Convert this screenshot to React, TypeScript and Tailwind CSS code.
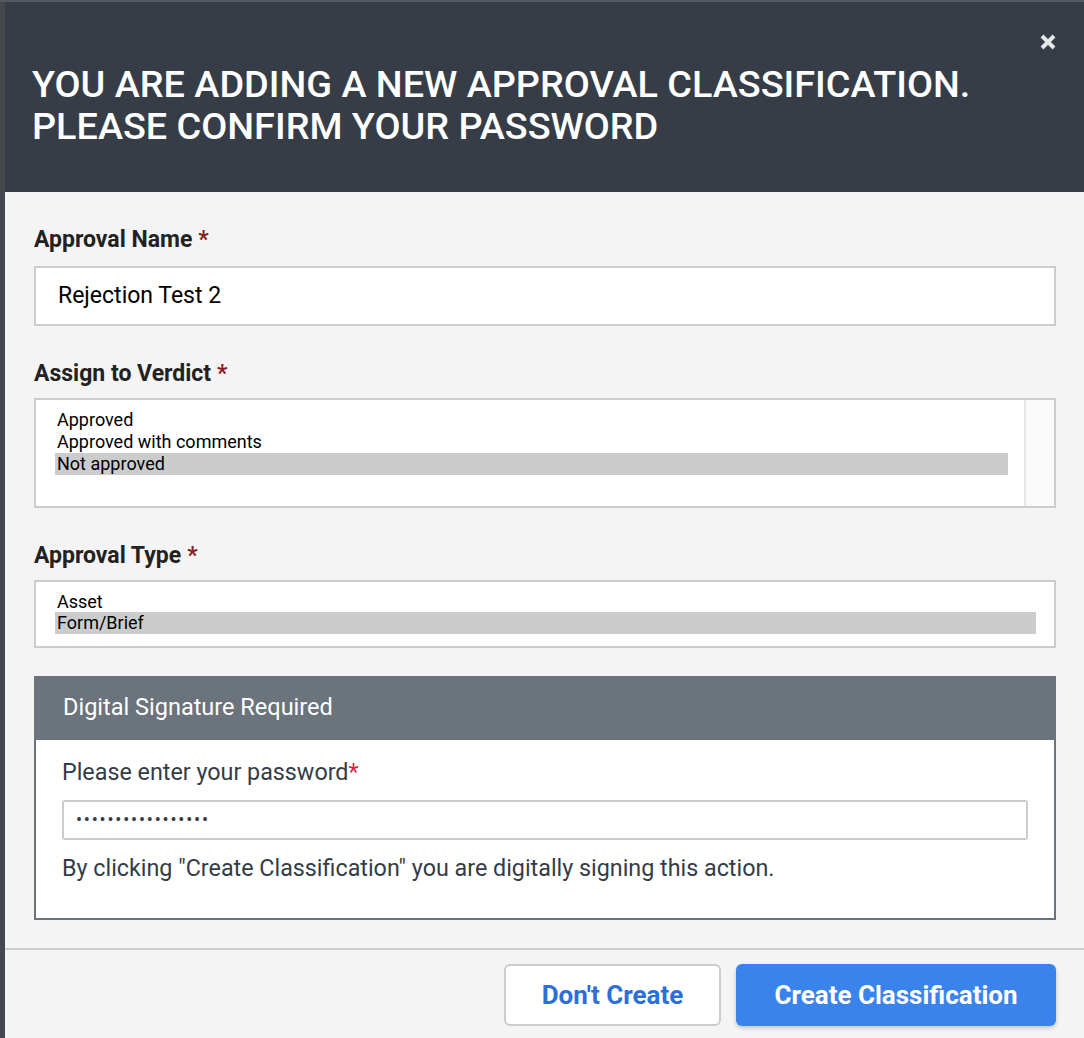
import React from "react";

function Req({ color = "text-[#8b1c1c]" }: { color?: string }) {
  return <span className={`${color} ml-[6px]`}>*</span>;
}

export default function App() {
  return (
    <div className="w-[1084px] h-[1038px] bg-[#45484d] flex flex-col overflow-hidden" style={{ fontFamily: "Roboto, 'Liberation Sans', sans-serif" }}>
      <div className="h-[2px] bg-[#56595f] shrink-0" />
      <div className="flex flex-1 min-h-0">
        <div className="w-[5px] shrink-0 bg-[#45484d]" />
        <div className="flex-1 flex flex-col bg-[#f4f4f4]">
          {/* Header */}
          <div className="relative h-[190px] shrink-0 bg-[#363d47] pt-[61px] pl-[27px] pr-[60px]">
            <h1 className="text-white text-[37.8px] leading-[42px] font-medium uppercase whitespace-nowrap">
              You are adding a new approval classification.
              <br />
              Please confirm your password
            </h1>
            <button className="absolute right-[26px] top-[30px] w-[20px] h-[20px] flex items-center justify-center">
              <svg viewBox="0 0 20 20" width="20" height="20">
                <path d="M4 4 L16 16 M16 4 L4 16" stroke="#e4e6e8" strokeWidth="4" strokeLinecap="butt" />
              </svg>
            </button>
          </div>

          {/* Body */}
          <div className="flex flex-col pl-[29px] pr-[28px] pt-[34px] h-[756px] shrink-0">
            <label className="text-[23px] leading-[28px] font-bold text-[#222]">
              Approval Name<Req />
            </label>
            <div className="mt-[12px] h-[60px] border-2 border-[#cccccc] bg-white flex items-center pl-[22px] text-[23px] text-black">
              Rejection Test 2
            </div>

            <label className="mt-[34px] text-[23px] leading-[28px] font-bold text-[#222]">
              Assign to Verdict<Req />
            </label>
            <div className="mt-[10px] h-[110px] border-2 border-[#cccccc] bg-white flex">
              <div className="flex-1 pt-[9px] pl-[19px] pr-[16px] text-[18px] leading-[22px] text-black">
                <div className="pl-[2px]">Approved</div>
                <div className="pl-[2px]">Approved with comments</div>
                <div className="pl-[2px] bg-[#cccccc]">Not approved</div>
              </div>
              <div className="w-[30px] bg-[#fafafa] border-l-2 border-[#e6e6e6]" />
            </div>

            <label className="mt-[34px] text-[23px] leading-[28px] font-bold text-[#222]">
              Approval Type<Req />
            </label>
            <div className="mt-[10px] h-[68px] border-2 border-[#cccccc] bg-white pt-[9px] pl-[19px] pr-[18px] text-[18px] leading-[22px] text-black">
              <div className="pl-[2px] leading-[21px]">Asset</div>
              <div className="pl-[2px] bg-[#cccccc]">Form/Brief</div>
            </div>

            {/* Digital signature */}
            <div className="mt-[28px] border-2 border-t-0 border-[#6b737c] bg-white flex flex-col h-[244px]">
              <div className="h-[64px] bg-[#6b737c] flex items-center -mx-[2px] pl-[29px] text-white text-[23.5px]">
                Digital Signature Required
              </div>
              <div className="pl-[26px] pr-[26px] pt-[18px] text-[#343c46] text-[23.3px] leading-[28px]">
                <div>
                  Please enter your password<span className="text-[#dc1f3c]">*</span>
                </div>
                <div className="mt-[14px] h-[40px] border-2 border-[#cccccc] rounded-[3px] flex items-center pl-[12px] text-[18px] tracking-[1.8px] text-[#343c46]">
                  •••••••••••••••••
                </div>
                <div className="mt-[14px]">
                  By clicking "Create Classification" you are digitally signing this action.
                </div>
              </div>
            </div>
          </div>

          {/* Footer */}
          <div className="flex-1 border-t-2 border-[#cccccc] bg-[#f4f4f4] flex justify-end items-start pt-[14px] pr-[28px] gap-[15px]">
            <button className="w-[217px] h-[62px] bg-white border-2 border-[#cccccc] rounded-[6px] text-[#2c6fd8] text-[26px] font-bold">
              Don't Create
            </button>
            <button className="w-[320px] h-[62px] bg-[#3a83ea] rounded-[6px] text-white text-[26px] font-bold shadow-[0_2px_4px_rgba(0,0,0,0.2)]">
              Create Classification
            </button>
          </div>
        </div>
      </div>
    </div>
  );
}
